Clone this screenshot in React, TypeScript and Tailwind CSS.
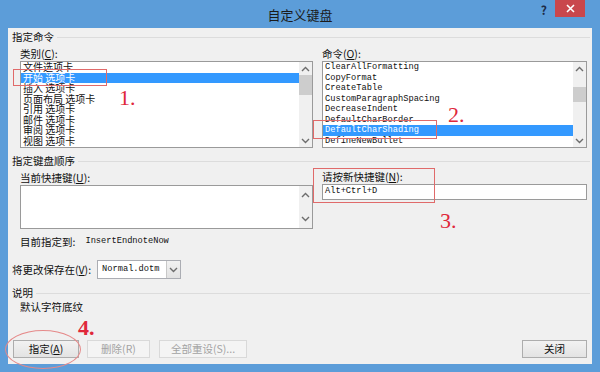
const cjk = { fontFamily: '"Noto Sans CJK SC", "Noto Sans", sans-serif' };
const mono = { fontFamily: '"Liberation Mono", "Noto Sans CJK SC", monospace' };
const serif = { fontFamily: '"Liberation Serif", serif' };

const categories = ['文件选项卡', '开始 选项卡', '插入 选项卡', '页面布局 选项卡', '引用 选项卡', '邮件 选项卡', '审阅 选项卡', '视图 选项卡'];
const commands = [
  'ClearAllFormatting',
  'CopyFormat',
  'CreateTable',
  'CustomParagraphSpacing',
  'DecreaseIndent',
  'DefaultCharBorder',
  'DefaultCharShading',
  'DefineNewBullet',
];

function Chevron({ up }: { up?: boolean }) {
  return (
    <svg width="9" height="6" viewBox="0 0 9 6" className="block">
      <polyline
        points={up ? '1,5 4.5,1.5 8,5' : '1,1 4.5,4.5 8,1'}
        fill="none"
        stroke="#6d6d6d"
        strokeWidth="1.4"
      />
    </svg>
  );
}

function ScrollBar({ thumbTop, thumbH }: { thumbTop: number; thumbH: number }) {
  return (
    <div className="w-[13px] flex flex-col bg-[#f0f0f0]">
      <div className="h-[13px] flex items-center justify-center">
        <Chevron up />
      </div>
      <div className="flex-1 flex flex-col">
        <div style={{ height: thumbTop }} />
        <div className="bg-[#cdcdcd]" style={{ height: thumbH }} />
      </div>
      <div className="h-[13px] flex items-center justify-center">
        <Chevron />
      </div>
    </div>
  );
}

function Btn({ children, disabled, w }: { children: React.ReactNode; disabled?: boolean; w: string }) {
  return (
    <div
      className={`${w} h-[18px] flex items-center justify-center text-[10.5px] border ${
        disabled
          ? 'border-[#d9d9d9] bg-[#f4f4f4] text-[#a3a3a3]'
          : 'border-[#adadad] bg-gradient-to-b from-[#f2f2f2] to-[#e3e3e3] text-[#111]'
      }`}
    >
      {children}
    </div>
  );
}

export default function App() {
  return (
    <div className="relative w-[600px] h-[372px] bg-[#5c9dd9] flex flex-col overflow-hidden" style={cjk}>
      {/* title bar */}
      <div className="h-[28px] grid grid-cols-[1fr_auto_1fr]">
        <div />
        <div className="flex items-center text-[13px] text-[#1b1b1b] pt-[1px]">自定义键盘</div>
        <div className="flex justify-end items-start pr-[15px]">
          <div className="h-[20px] flex items-center mr-[8px] text-[12px] font-bold text-[#1d2b45]">?</div>
          <div className="w-[30px] h-[17px] bg-[#c9474d] flex items-center justify-center">
            <svg width="9" height="9" viewBox="0 0 9 9">
              <path d="M1 1L8 8M8 1L1 8" stroke="#fff" strokeWidth="1.6" />
            </svg>
          </div>
        </div>
      </div>

      {/* client area */}
      <div className="mx-[8px] mb-[8px] flex-1 bg-[#f0f0f0] flex flex-col text-[10.5px] text-[#111]">
        {/* 指定命令 */}
        <div className="h-[18px] flex items-center pl-[4px] pr-[2px]">
          <span>指定命令</span>
          <div className="flex-1 h-px bg-[#dcdcdc] ml-[3px]" />
        </div>
        <div className="flex pl-[12px] gap-[9px]">
          <div className="w-[293px] flex flex-col">
            <div className="h-[15px] flex items-center">
              类别(<u>C</u>):
            </div>
            <div className="h-[87px] border border-[#9a9a9a] bg-white flex">
              <div className="flex-1 flex flex-col text-[10px]">
                {categories.map((c, i) => (
                  <div
                    key={c}
                    className={`h-[10.5px] leading-[10.5px] pl-[2px] whitespace-pre ${
                      i === 1 ? 'bg-[#3399ff] text-white' : ''
                    }`}
                  >
                    {c}
                  </div>
                ))}
              </div>
              <ScrollBar thumbTop={0} thumbH={20} />
            </div>
          </div>
          <div className="w-[265px] flex flex-col">
            <div className="h-[15px] flex items-center">
              命令(<u>O</u>):
            </div>
            <div className="h-[87px] border border-[#9a9a9a] bg-white flex">
              <div className="flex-1 flex flex-col text-[8.7px]" style={mono}>
                {commands.map((c, i) => (
                  <div
                    key={c}
                    className={`h-[10.5px] leading-[10.5px] pl-[2px] ${i === 6 ? 'bg-[#3399ff] text-white' : ''}`}
                  >
                    {c}
                  </div>
                ))}
              </div>
              <ScrollBar thumbTop={12} thumbH={15} />
            </div>
          </div>
        </div>

        {/* 指定键盘顺序 */}
        <div className="h-[18px] mt-[4px] flex items-center pl-[4px] pr-[2px]">
          <span>指定键盘顺序</span>
          <div className="flex-1 h-px bg-[#dcdcdc] ml-[3px]" />
        </div>
        <div className="flex pl-[12px] gap-[9px]">
          <div className="w-[293px] flex flex-col">
            <div className="h-[15px] flex items-center">
              当前快捷键(<u>U</u>):
            </div>
            <div className="h-[44px] border border-[#9a9a9a] bg-white flex">
              <div className="flex-1" />
              <div className="w-[13px] bg-[#f0f0f0] flex flex-col justify-between py-[6px] items-center">
                <Chevron up />
                <Chevron />
              </div>
            </div>
          </div>
          <div className="w-[265px] flex flex-col">
            <div className="h-[14px] flex items-center">
              请按新快捷键(<u>N</u>):
            </div>
            <div className="h-[16px] border border-[#9a9a9a] bg-white flex items-center pl-[2px] text-[8.7px]" style={mono}>
              Alt+Ctrl+D
            </div>
          </div>
        </div>

        <div className="h-[18px] mt-[4px] flex items-center pl-[12px]">
          <span>目前指定到:</span>
          <span className="ml-[10px] text-[8.7px]" style={mono}>
            InsertEndnoteNow
          </span>
        </div>

        <div className="h-[19px] mt-[9px] flex items-center pl-[4px]">
          <span>
            将更改保存在(<u>V</u>):
          </span>
          <div className="ml-[6px] w-[84px] h-[19px] border border-[#abadb3] bg-white flex items-center">
            <span className="flex-1 pl-[4px] text-[8.7px]" style={mono}>
              Normal.dotm
            </span>
            <div className="w-[14px] h-full border-l border-[#c8c8c8] bg-gradient-to-b from-[#f2f2f2] to-[#e2e2e2] flex items-center justify-center">
              <Chevron />
            </div>
          </div>
        </div>

        {/* 说明 */}
        <div className="h-[16px] mt-[6px] flex items-center pl-[4px] pr-[2px]">
          <span>说明</span>
          <div className="flex-1 h-px bg-[#dcdcdc] ml-[3px]" />
        </div>
        <div className="h-[12px] flex items-center pl-[12px]">默认字符底纹</div>

        <div className="flex-1" />
        <div className="flex items-center pl-[5px] pr-[5px] mb-[6px]">
          <Btn w="w-[66px]">
            指定(<u>A</u>)
          </Btn>
          <div className="w-[8px]" />
          <Btn w="w-[63px]" disabled>
            删除(R)
          </Btn>
          <div className="w-[9px]" />
          <Btn w="w-[88px]" disabled>
            全部重设(S)...
          </Btn>
          <div className="flex-1" />
          <Btn w="w-[65px]">关闭</Btn>
        </div>
      </div>

      {/* annotations */}
      <div className="absolute left-[13px] top-[69px] w-[94px] h-[17px] border border-[#e06a6a]" />
      <div className="absolute left-[313px] top-[120px] w-[124px] h-[19px] border border-[#e06a6a]" />
      <div className="absolute left-[313px] top-[168px] w-[122px] h-[35px] border border-[#e06a6a]" />
      <div className="absolute left-[5px] top-[330px] w-[76px] h-[39px] rounded-[50%] border border-[#e58a8a]" />
      <div className="absolute left-[119px] top-[87px] text-[22px] leading-none text-[#e0283a]" style={serif}>
        1.
      </div>
      <div className="absolute left-[448px] top-[104px] text-[22px] leading-none text-[#e0283a]" style={serif}>
        2.
      </div>
      <div className="absolute left-[440px] top-[210px] text-[22px] leading-none text-[#e0283a]" style={serif}>
        3.
      </div>
      <div className="absolute left-[78px] top-[317px] text-[22px] leading-none font-bold text-[#e0283a]" style={serif}>
        4.
      </div>
    </div>
  );
}
